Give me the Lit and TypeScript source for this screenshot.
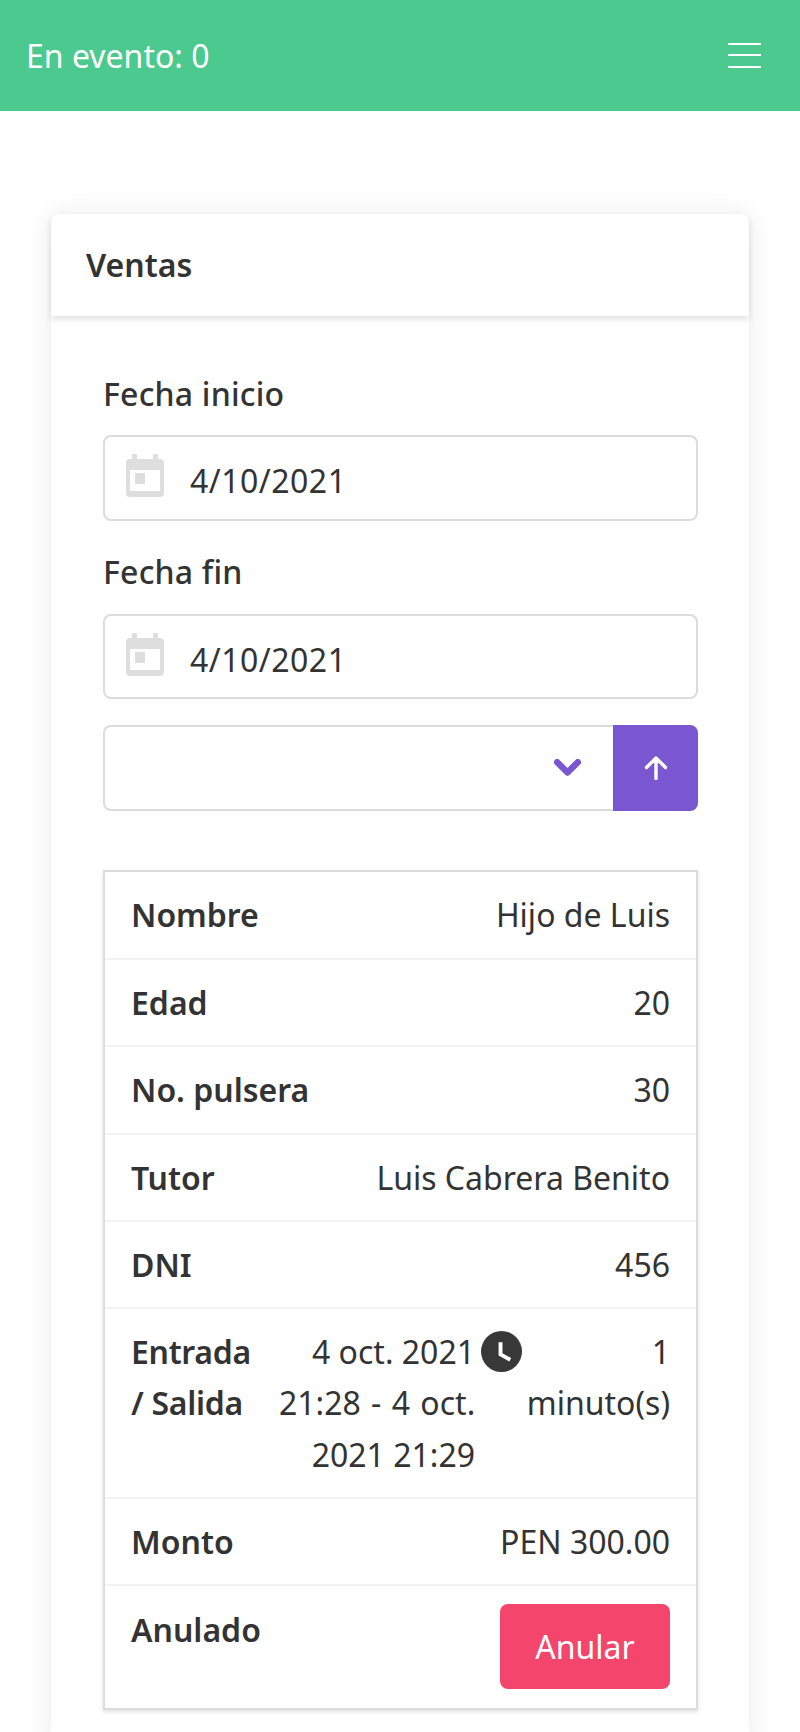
import { LitElement, html, css } from "lit";
import { customElement } from "lit/decorators.js";

const calendar = html`<svg class="cal" viewBox="0 0 38 43" aria-hidden="true">
  <path fill="#dedede" d="M7 0h3a1 1 0 0 1 1 1v4h16V1a1 1 0 0 1 1-1h3a1 1 0 0 1 1 1v4h2a4 4 0 0 1 4 4v30a4 4 0 0 1-4 4H4a4 4 0 0 1-4-4V9a4 4 0 0 1 4-4h2V1a1 1 0 0 1 1-1z"/>
  <rect x="4" y="16" width="30" height="21" fill="#fff"/>
  <rect x="9" y="19" width="10" height="11" fill="#dedede"/>
</svg>`;

@customElement("app-root")
export class AppRoot extends LitElement {
  static styles = css`
    :host { display: block; width: 800px; height: 1732px; overflow: hidden; background: #fff; color: #333;
      font-family: "Noto Sans", "Open Sans", sans-serif; font-size: 32px; line-height: 51.4px; }
    .nav { height: 110.5px; background: #4bc98f; color: #fff; display: flex; align-items: center; justify-content: space-between; padding: 0 39px 0 26px; box-sizing: border-box; }
    .burger { width: 33px; height: 25px; display: flex; flex-direction: column; justify-content: space-between; }
    .burger i { display: block; height: 2px; background: #fff; }
    .card { margin: 103.5px 51px 0; box-shadow: 0 2px 28px rgba(0,0,0,.09); border-radius: 8px 8px 0 0; }
    .card-h { height: 102px; display: flex; align-items: center; padding: 0 35px; font-weight: 600; box-shadow: 0 3px 6px rgba(0,0,0,.12); border-radius: 8px 8px 0 0; position: relative; }
    .body { padding: 52px 51px 40px 52px; }
    label { display: block; font-weight: 500; height: 51.4px; letter-spacing: .2px; }
    .field { height: 85.5px; box-sizing: border-box; margin: 16px 0 25.5px; border: 2px solid #dcdcdc; border-radius: 8px; display: flex; align-items: center; padding: 0 21px; gap: 26px; }
    .cal { width: 38px; height: 43px; margin-top: -5px; }
    .date { position: relative; top: 3px; letter-spacing: .5px; }
    .select { height: 85.5px; display: flex; margin-top: 26px; }
    .sel { flex: 1; border: 2px solid #dcdcdc; border-right: 0; border-radius: 8px 0 0 8px; display: flex; align-items: center; justify-content: flex-end; padding-right: 32px; }
    .up { width: 85px; background: #7a56d0; border-radius: 0 8px 8px 0; display: flex; align-items: center; justify-content: center; }
    .tbl { margin-top: 59.5px; border: 2px solid #dcdcdc; box-shadow: 0 2px 4px rgba(0,0,0,.12); }
    .row { display: flex; justify-content: space-between; padding: 17px 26px; border-top: 2px solid #f3f3f3; }
    .row:first-child { border-top: 0; }
    .row:last-child { padding: 18px 26px 19px; }
    .k { font-weight: 600; }
    .v { text-align: right; }
    .wide { justify-content: flex-start; padding-top: 16.5px; padding-bottom: 16.5px; }
    .wide .k { width: 118px; flex: none; letter-spacing: -.3px; }
    .wide .v { margin-left: auto; white-space: nowrap; }
    .mid { position: relative; flex: none; width: 196px; text-align: right; margin-left: 30px; white-space: nowrap; }
    .wsp { word-spacing: 2px; }
    .clock { position: absolute; left: 202px; top: 5px; width: 41px; height: 41px; }
    .btn { background: #f4466c; color: #fff; width: 170px; height: 85px; border-radius: 8px; display: flex; align-items: center; justify-content: center; }
  `;

  rows = [["Nombre", "Hijo de Luis"], ["Edad", "20"], ["No. pulsera", "30"], ["Tutor", "Luis Cabrera Benito"], ["DNI", "456"]];

  render() {
    return html`
      <div class="nav"><span>En evento: 0</span><div class="burger"><i></i><i></i><i></i></div></div>
      <div class="card">
        <div class="card-h">Ventas</div>
        <div class="body">
          <label>Fecha inicio</label>
          <div class="field">${calendar}<span class="date">4/10/2021</span></div>
          <label>Fecha fin</label>
          <div class="field">${calendar}<span class="date">4/10/2021</span></div>
          <div class="select">
            <div class="sel"><svg width="27" height="18" viewBox="0 0 27 18"><path d="M3.200 3.200L13.500 13.500 23.800 3.200" fill="none" stroke="#7a56d0" stroke-width="6.400" stroke-linecap="round" stroke-linejoin="round"/></svg></div>
            <div class="up"><svg width="24" height="24" viewBox="0 0 24 24"><path d="M12 22.500V2.500M2.500 11.500L12 2l9.500 9.500" fill="none" stroke="#fff" stroke-width="3.400" stroke-linecap="round" stroke-linejoin="round"/></svg></div>
          </div>
          <div class="tbl">
            ${this.rows.map(([k, v]) => html`<div class="row"><span class="k">${k}</span><span class="v">${v}</span></div>`)}
            <div class="row wide">
              <span class="k">Entrada / Salida</span>
              <span class="mid">4 oct. 2021<br /><span class="wsp">21:28 - 4 oct.</span><br />2021 21:29
                <svg class="clock" viewBox="0 0 42 42"><circle cx="21" cy="21" r="21" fill="#383838"/><path d="M20 11.500V24l10 5.500" fill="none" stroke="#fff" stroke-width="4"/></svg>
              </span>
              <span class="v">1<br />minuto(s)</span>
            </div>
            <div class="row"><span class="k">Monto</span><span class="v">PEN 300.00</span></div>
            <div class="row"><span class="k">Anulado</span><div class="btn">Anular</div></div>
          </div>
        </div>
      </div>
    `;
  }
}
